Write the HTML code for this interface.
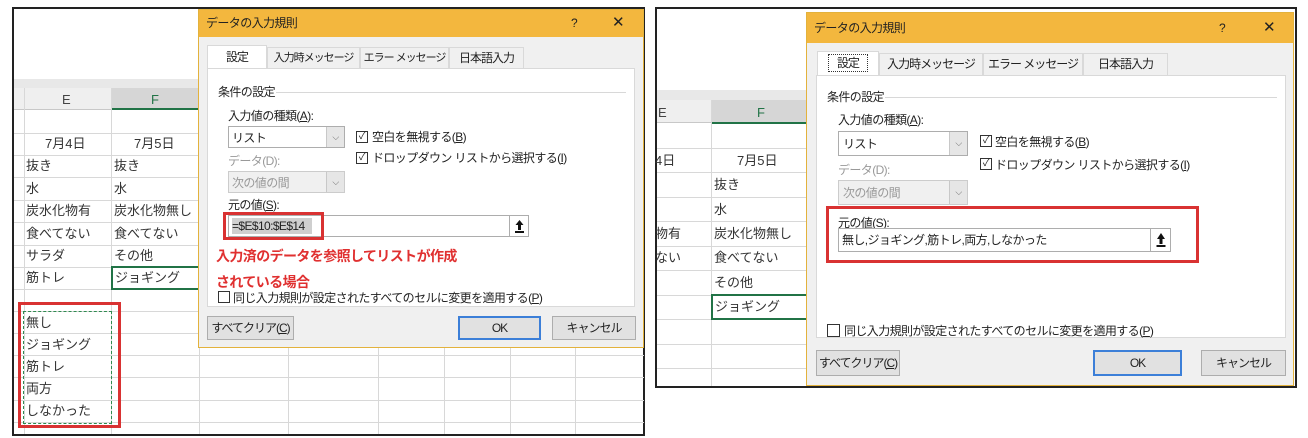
<!DOCTYPE html>
<html><head><meta charset="utf-8"><style>
*{margin:0;padding:0;box-sizing:border-box}
body{width:1308px;height:438px;background:#fff;position:relative;overflow:hidden;font-family:"Liberation Sans","Noto Sans CJK JP",sans-serif;font-size:12px;color:#222}
.a{position:absolute}
.t{position:absolute;white-space:nowrap;line-height:1}
.hl{position:absolute;height:1px;background:#d8d8d8}
.vl{position:absolute;width:1px;background:#d8d8d8}
.dlg{position:absolute;background:#f0f0f0;border:1px solid #e3b23c;letter-spacing:-0.6px}
.title{position:absolute;left:0;right:0;top:0;background:#f3b73e}
.tab{position:absolute;border:1px solid #d9d9d9;border-bottom:none;background:#f0f0f0;font-size:12px;text-align:center;white-space:nowrap;letter-spacing:-1px}
.panel{position:absolute;background:#fff;border:1px solid #d9d9d9}
.combo{position:absolute;background:#fff;border:1px solid #adadad;font-size:12px}
.combo .ar{position:absolute;right:0;top:0;bottom:0;width:18px;background:#e6e6e6;border-left:1px solid #c8c8c8;color:#666;font-size:9px;text-align:center}
.cb{position:absolute;width:12px;height:12px;border:1px solid #333;background:#fff;font-size:10px;line-height:10px;text-align:center}
.btn{position:absolute;background:#e1e1e1;border:1px solid #adadad;font-size:12px;text-align:center;white-space:nowrap;letter-spacing:-1px}
.cell{font-size:13px;color:#333}
.up{position:absolute;border-left:1px solid #adadad;background:#fff}
</style></head><body>

<!-- LEFT PANEL -->
<div class="a" style="left:12px;top:7px;width:633px;height:429px;border:2px solid #222"></div>
<div class="a" style="left:14px;top:79px;width:186px;height:9px;background:#e8e8e8"></div>
<div class="a" style="left:14px;top:88px;width:186px;height:22px;background:#efefef;border-bottom:1px solid #c8c8c8"></div>
<div class="a" style="left:111px;top:88px;width:88px;height:22px;background:#d6d6d6;border-bottom:2px solid #217346"></div>
<div class="vl" style="left:24px;top:88px;height:346px"></div>
<div class="vl" style="left:111px;top:88px;height:346px"></div>
<div class="vl" style="left:199px;top:347px;height:87px"></div>
<div class="vl" style="left:288px;top:347px;height:87px"></div>
<div class="vl" style="left:378px;top:347px;height:87px"></div>
<div class="vl" style="left:444px;top:347px;height:87px"></div>
<div class="vl" style="left:510px;top:347px;height:87px"></div>
<div class="vl" style="left:575px;top:347px;height:87px"></div>
<div class="t cell" style="left:62px;top:93px;color:#444">E</div>
<div class="t cell" style="left:151px;top:93px;color:#217346">F</div>
<div class="hl" style="left:14px;top:133px;width:186px"></div>
<div class="hl" style="left:14px;top:155px;width:186px"></div>
<div class="hl" style="left:14px;top:177px;width:186px"></div>
<div class="hl" style="left:14px;top:200px;width:186px"></div>
<div class="hl" style="left:14px;top:222px;width:186px"></div>
<div class="hl" style="left:14px;top:245px;width:186px"></div>
<div class="hl" style="left:14px;top:267px;width:186px"></div>
<div class="hl" style="left:14px;top:289px;width:186px"></div>
<div class="hl" style="left:14px;top:311px;width:630px"></div>
<div class="hl" style="left:14px;top:333px;width:630px"></div>
<div class="hl" style="left:14px;top:355px;width:630px"></div>
<div class="hl" style="left:14px;top:377px;width:630px"></div>
<div class="hl" style="left:14px;top:400px;width:630px"></div>
<div class="hl" style="left:14px;top:422px;width:630px"></div>
<div class="t cell" style="left:45px;top:137px">7月4日</div>
<div class="t cell" style="left:134px;top:137px">7月5日</div>
<div class="t cell" style="left:26px;top:159px">抜き</div><div class="t cell" style="left:114px;top:159px">抜き</div>
<div class="t cell" style="left:26px;top:182px">水</div><div class="t cell" style="left:114px;top:182px">水</div>
<div class="t cell" style="left:26px;top:204px">炭水化物有</div><div class="t cell" style="left:114px;top:204px">炭水化物無し</div>
<div class="t cell" style="left:26px;top:227px">食べてない</div><div class="t cell" style="left:114px;top:227px">食べてない</div>
<div class="t cell" style="left:26px;top:249px">サラダ</div><div class="t cell" style="left:114px;top:249px">その他</div>
<div class="t cell" style="left:26px;top:271px">筋トレ</div>
<div class="a" style="left:111px;top:266px;width:89px;height:24px;border:2px solid #217346;border-right:none"></div>
<div class="t cell" style="left:115px;top:271px">ジョギング</div>
<div class="a" style="left:18px;top:302px;width:103px;height:126px;border:3px solid #d93232"></div>
<div class="a" style="left:23px;top:311px;width:89px;height:113px;border:1px dashed #2f8a4f"></div>
<div class="t cell" style="left:26px;top:316px">無し</div>
<div class="t cell" style="left:26px;top:338px">ジョギング</div>
<div class="t cell" style="left:26px;top:360px">筋トレ</div>
<div class="t cell" style="left:26px;top:382px">両方</div>
<div class="t cell" style="left:26px;top:404px">しなかった</div>

<div class="dlg" style="left:198px;top:9px;width:446px;height:339px">
 <div class="title" style="height:27px"></div>
 <div class="t" style="left:7px;top:7px;font-size:12px">データの入力規則</div>
 <div class="t" style="left:372px;top:7px;font-size:12px">?</div>
 <div class="t" style="left:413px;top:5px;font-size:15px">✕</div>
 <div class="tab" style="left:8px;top:35px;width:60px;height:24px;background:#fff;line-height:22px">設定</div>
 <div class="tab" style="left:68px;top:37px;width:93px;height:21px;line-height:20px;font-size:11px">入力時メッセージ</div>
 <div class="tab" style="left:161px;top:37px;width:89px;height:21px;line-height:20px;font-size:11px">エラー メッセージ</div>
 <div class="tab" style="left:250px;top:37px;width:75px;height:21px;line-height:20px">日本語入力</div>
 <div class="panel" style="left:8px;top:58px;width:428px;height:239px">
  <div class="t" style="left:10px;top:17px">条件の設定</div>
  <div class="hl" style="left:68px;top:23px;width:350px"></div>
  <div class="t" style="left:20px;top:41px">入力値の種類(<u>A</u>):</div>
  <div class="combo" style="left:20px;top:57px;width:117px;height:22px"><span class="t" style="left:3px;top:5px">リスト</span><div class="ar" style="line-height:20px">⌵</div></div>
  <div class="cb" style="left:148px;top:62px">✓</div><div class="t" style="left:164px;top:62px">空白を無視する(<u>B</u>)</div>
  <div class="cb" style="left:148px;top:83px">✓</div><div class="t" style="left:164px;top:83px">ドロップダウン リストから選択する(<u>I</u>)</div>
  <div class="t" style="left:20px;top:86px;color:#999">データ(D):</div>
  <div class="combo" style="left:20px;top:102px;width:117px;height:22px;background:#f0f0f0;border-color:#ccc"><span class="t" style="left:3px;top:5px;color:#999">次の値の間</span><div class="ar" style="line-height:20px">⌵</div></div>
  <div class="t" style="left:20px;top:130px">元の値(<u>S</u>):</div>
  <div class="a" style="left:20px;top:146px;width:301px;height:22px;background:#fff;border:1px solid #adadad"></div>
  <div class="a" style="left:24px;top:149px;width:80px;height:16px;background:#cfcfcf"></div>
  <div class="t" style="left:24px;top:151px">=$E$10:$E$14</div>
  <div class="up" style="left:301px;top:147px;width:19px;height:20px"><svg width="19" height="20"><path d="M9.5 4 L5.5 9 H8 V14 H11 V9 H13.5 Z" fill="#111"/><rect x="5" y="15" width="9" height="2" fill="#111"/></svg></div>
  <div class="a" style="left:15px;top:143px;width:101px;height:28px;border:3px solid #d93232"></div>
  <div class="t" style="left:8px;top:180px;color:#e03030;font-weight:bold;font-size:14px">入力済のデータを参照してリストが作成</div>
  <div class="t" style="left:8px;top:206px;color:#e03030;font-weight:bold;font-size:14px">されている場合</div>
  <div class="cb" style="left:10px;top:222px"></div><div class="t" style="left:25px;top:223px">同じ入力規則が設定されたすべてのセルに変更を適用する(<u>P</u>)</div>
 </div>
 <div class="btn" style="left:8px;top:306px;width:87px;height:24px;line-height:22px">すべてクリア(<u>C</u>)</div>
 <div class="btn" style="left:259px;top:306px;width:83px;height:24px;line-height:20px;border:2px solid #3c7fd8">OK</div>
 <div class="btn" style="left:353px;top:306px;width:84px;height:24px;line-height:22px">キャンセル</div>
</div>

<!-- RIGHT PANEL -->
<div class="a" style="left:655px;top:7px;width:642px;height:381px;border:2px solid #222"></div>
<div class="a" style="left:657px;top:90px;width:150px;height:10px;background:#e8e8e8"></div>
<div class="a" style="left:657px;top:100px;width:150px;height:23px;background:#efefef;border-bottom:1px solid #c8c8c8"></div>
<div class="a" style="left:711px;top:100px;width:96px;height:24px;background:#d6d6d6;border-bottom:2px solid #217346"></div>
<div class="vl" style="left:711px;top:100px;height:286px"></div>
<div class="t cell" style="left:658px;top:106px;color:#444">E</div>
<div class="t cell" style="left:757px;top:106px;color:#217346">F</div>
<div class="hl" style="left:657px;top:148px;width:150px"></div>
<div class="hl" style="left:657px;top:172px;width:150px"></div>
<div class="hl" style="left:657px;top:197px;width:150px"></div>
<div class="hl" style="left:657px;top:221px;width:150px"></div>
<div class="hl" style="left:657px;top:246px;width:150px"></div>
<div class="hl" style="left:657px;top:270px;width:150px"></div>
<div class="hl" style="left:657px;top:295px;width:150px"></div>
<div class="hl" style="left:657px;top:319px;width:150px"></div>
<div class="hl" style="left:657px;top:344px;width:150px"></div>
<div class="hl" style="left:657px;top:368px;width:150px"></div>
<div class="t cell" style="left:655px;top:154px">4日</div><div class="t cell" style="left:737px;top:154px">7月5日</div>
<div class="t cell" style="left:714px;top:178px">抜き</div>
<div class="t cell" style="left:714px;top:203px">水</div>
<div class="t cell" style="left:655px;top:227px">物有</div><div class="t cell" style="left:714px;top:227px">炭水化物無し</div>
<div class="t cell" style="left:655px;top:251px">ない</div><div class="t cell" style="left:714px;top:251px">食べてない</div>
<div class="t cell" style="left:714px;top:276px">その他</div>
<div class="a" style="left:711px;top:294px;width:96px;height:26px;border:2px solid #217346;border-right:none"></div>
<div class="t cell" style="left:715px;top:300px">ジョギング</div>

<div class="dlg" style="left:806px;top:12px;width:488px;height:374px">
 <div class="title" style="height:30px"></div>
 <div class="t" style="left:7px;top:9px;font-size:12px">データの入力規則</div>
 <div class="t" style="left:412px;top:9px;font-size:12px">?</div>
 <div class="t" style="left:456px;top:7px;font-size:15px">✕</div>
 <div class="tab" style="left:10px;top:38px;width:62px;height:25px;background:#fff;line-height:23px"><span style="border:1px dotted #333;padding:1px 8px">設定</span></div>
 <div class="tab" style="left:72px;top:40px;width:104px;height:23px;line-height:21px">入力時メッセージ</div>
 <div class="tab" style="left:176px;top:40px;width:100px;height:23px;line-height:21px">エラー メッセージ</div>
 <div class="tab" style="left:276px;top:40px;width:85px;height:23px;line-height:21px">日本語入力</div>
 <div class="panel" style="left:9px;top:62px;width:470px;height:263px">
  <div class="t" style="left:10px;top:15px">条件の設定</div>
  <div class="hl" style="left:68px;top:21px;width:392px"></div>
  <div class="t" style="left:21px;top:38px">入力値の種類(<u>A</u>):</div>
  <div class="combo" style="left:21px;top:55px;width:130px;height:25px"><span class="t" style="left:4px;top:6px">リスト</span><div class="ar" style="line-height:23px">⌵</div></div>
  <div class="cb" style="left:163px;top:59px">✓</div><div class="t" style="left:178px;top:60px">空白を無視する(<u>B</u>)</div>
  <div class="cb" style="left:163px;top:82px">✓</div><div class="t" style="left:178px;top:83px">ドロップダウン リストから選択する(<u>I</u>)</div>
  <div class="t" style="left:21px;top:88px;color:#999">データ(D):</div>
  <div class="combo" style="left:21px;top:104px;width:130px;height:25px;background:#f0f0f0;border-color:#ccc"><span class="t" style="left:4px;top:6px;color:#999">次の値の間</span><div class="ar" style="line-height:23px">⌵</div></div>
  <div class="a" style="left:9px;top:130px;width:373px;height:57px;border:3px solid #d93232"></div>
  <div class="t" style="left:21px;top:141px">元の値(<u>S</u>):</div>
  <div class="a" style="left:21px;top:152px;width:333px;height:24px;background:#fff;border:1px solid #adadad"></div>
  <div class="t" style="left:25px;top:158px">無し,ジョギング,筋トレ,両方,しなかった</div>
  <div class="up" style="left:333px;top:153px;width:20px;height:22px"><svg width="20" height="22"><path d="M10 4 L6 10 H8.5 V15 H11.5 V10 H14 Z" fill="#111"/><rect x="5.5" y="16" width="9" height="2" fill="#111"/></svg></div>
  <div class="cb" style="left:10px;top:248px;width:13px;height:13px"></div><div class="t" style="left:27px;top:249px">同じ入力規則が設定されたすべてのセルに変更を適用する(<u>P</u>)</div>
 </div>
 <div class="btn" style="left:9px;top:337px;width:84px;height:26px;line-height:24px">すべてクリア(<u>C</u>)</div>
 <div class="btn" style="left:286px;top:337px;width:89px;height:26px;line-height:22px;border:2px solid #3c7fd8">OK</div>
 <div class="btn" style="left:394px;top:337px;width:85px;height:26px;line-height:24px">キャンセル</div>
</div>
</body></html>
